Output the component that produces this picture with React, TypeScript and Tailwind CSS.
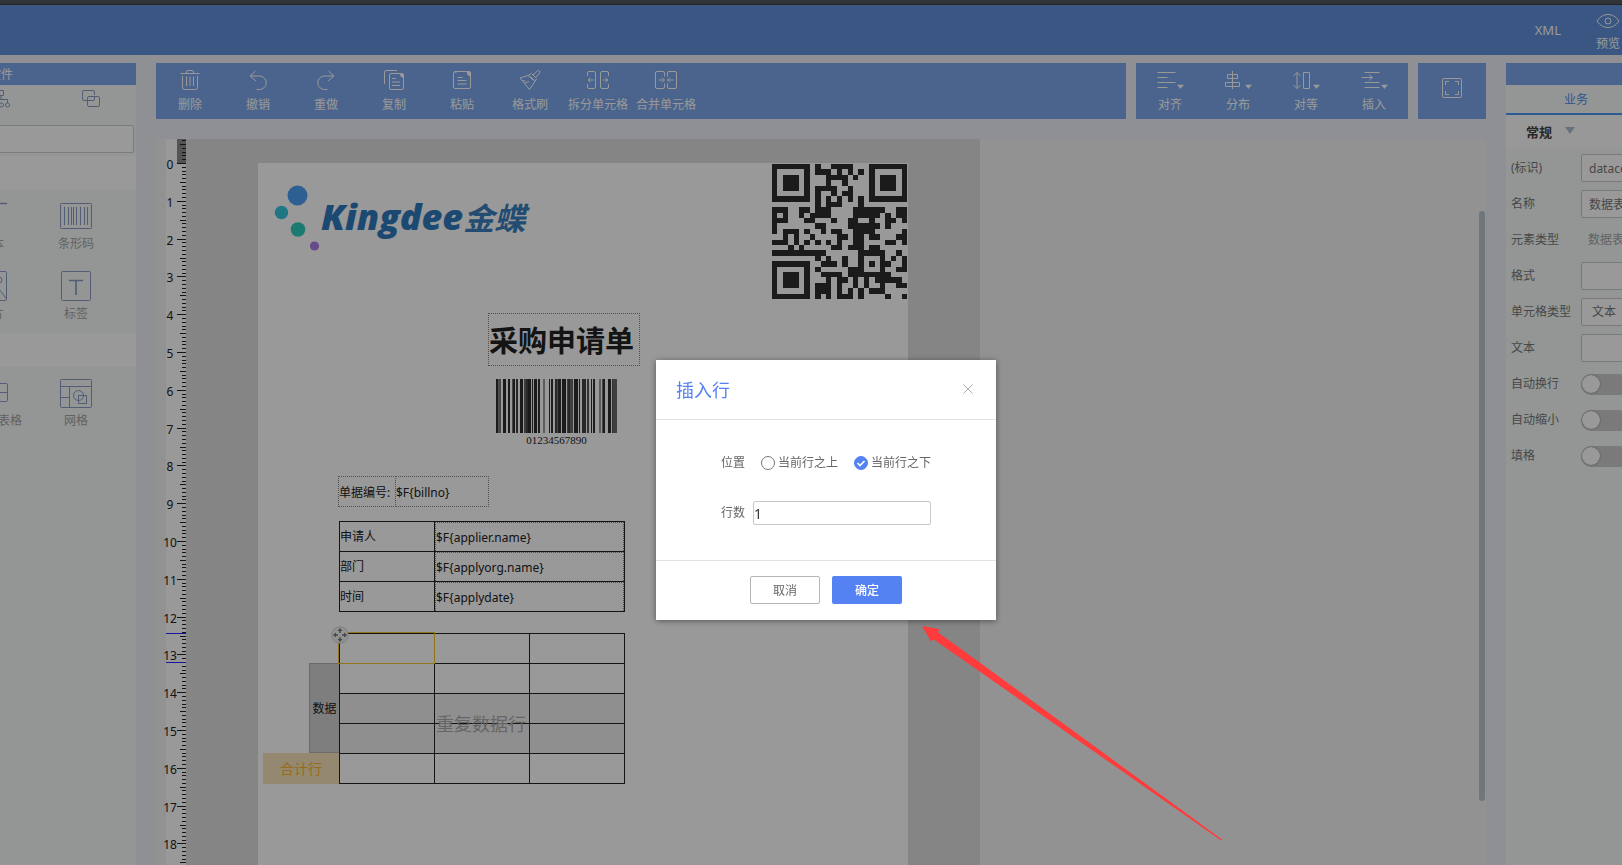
import type { ReactNode } from 'react';

const FONT = "font-['Noto_Sans','Noto_Sans_CJK_SC',sans-serif]";

/* ---------- icons ---------- */

function Icon({ w, h, children, className = '' }: { w: number; h: number; children: ReactNode; className?: string }) {
  return (
    <svg
      width={w}
      height={h}
      viewBox={`0 0 ${w} ${h}`}
      fill="none"
      stroke="currentColor"
      strokeWidth="1"
      className={className}
      aria-hidden="true"
    >
      {children}
    </svg>
  );
}

const TrashIcon = () => (
  <Icon w={20} h={20}>
    <path d="M.5 3.500h19M6.500 3.500V2a1.500 1.500 0 0 1 1.500-1.500h4A1.500 1.500 0 0 1 13.500 2v1.500M2.500 6v11.500a2 2 0 0 0 2 2h11a2 2 0 0 0 2-2V6M6.500 6.500v9.500M10 6.500v9.500M13.500 6.500v9.500" />
  </Icon>
);
const UndoIcon = () => (
  <Icon w={20} h={20}>
    <path d="M7.500 1 2 6l6 5M2 6h9.500a6.700 6.700 0 0 1 0 13.500H8.500" />
  </Icon>
);
const RedoIcon = () => (
  <Icon w={20} h={20}>
    <path d="M12.500 1 18 6l-6 5M18 6H8.500a6.700 6.700 0 0 0 0 13.500H11.500" />
  </Icon>
);
const CopyIcon = () => (
  <Icon w={20} h={20}>
    <path d="M.5 14V2A1.500 1.500 0 0 1 2 .5h11M5.500 5A1.500 1.500 0 0 1 7 3.500h10l2.500 3V18a1.500 1.500 0 0 1-1.500 1.500H7A1.500 1.500 0 0 1 5.500 18zM8 8.500h4M8 12h8M8 15.500h8" />
    <path d="M16.500 3.500h1.500a1.500 1.500 0 0 1 1.500 1.500v2.500l-2.500-1z" fill="currentColor" />
  </Icon>
);
const PasteIcon = () => (
  <Icon w={20} h={20}>
    <path d="M3.500 3A1.500 1.500 0 0 1 5 1.500h12l1.500 3V17a1.500 1.500 0 0 1-1.500 1.500H3A1.500 1.500 0 0 1 1.500 17V3A1.500 1.500 0 0 1 3 1.500h2M5.500 7.500h5M5.500 10.500h9M5.500 14h9" />
    <path d="M15 1.500h2a1.500 1.500 0 0 1 1.500 1.500v3l-2.500-1z" fill="currentColor" />
  </Icon>
);
const BrushIcon = () => (
  <Icon w={22} h={20}>
    <path d="m1 8 8-2.500 7 6L10.500 19.500zM3.500 10.500l3 .5M6 13l4-1.500M9 5.500l3.500-2 5 5-1.500 3M14 5l4.500-4.300a1.600 1.600 0 0 1 2.200 2.200L17 7" />
    <path d="m11.500 6.500 3.500 3.500" />
  </Icon>
);
const SplitIcon = () => (
  <Icon w={22} h={20}>
    <path d="M.5 6V3A1.500 1.500 0 0 1 2 1.500h5A1.500 1.500 0 0 1 8.500 3v3M.5 14v3A1.500 1.500 0 0 0 2 18.500h5A1.500 1.500 0 0 0 8.500 17v-3M21.500 6V3A1.500 1.500 0 0 0 20 1.500h-5A1.500 1.500 0 0 0 13.500 3v14a1.500 1.500 0 0 0 1.500 1.500h5a1.500 1.500 0 0 0 1.500-1.500v-3M8.500 6v8M1 10h5.500M3.500 7.500 1 10l2.500 2.500M15.500 10h5.500M18.500 7.500 21 10l-2.500 2.500" />
  </Icon>
);
const MergeIcon = () => (
  <Icon w={22} h={20}>
    <path d="M9.500 6.500V3A1.500 1.500 0 0 0 8 1.500H2A1.500 1.500 0 0 0 .5 3v14A1.500 1.500 0 0 0 2 18.500h6A1.500 1.500 0 0 0 9.500 17v-3.500M12.500 6.500V3A1.500 1.500 0 0 1 14 1.500h6A1.500 1.500 0 0 1 21.500 3v14a1.500 1.500 0 0 1-1.500 1.500h-6a1.500 1.500 0 0 1-1.500-1.500v-3.500M3.500 10h6M7 7.500 9.500 10 7 12.500M18.500 10h-6M15 7.500 12.500 10l2.500 2.500" />
  </Icon>
);
const Caret = () => <path d="M20.500 15h6l-3 3.500z" fill="currentColor" stroke="currentColor" strokeWidth=".5" />;
const AlignIcon = () => (
  <Icon w={27} h={20}>
    <path d="M.5 2.500h18M.5 7.500h10M.5 12.500h18M.5 17.500h10" />
    <Caret />
  </Icon>
);
const DistributeIcon = () => (
  <Icon w={27} h={20}>
    <path d="M7.500 1v18M2.500 4.500h10v4h-10zM.5 12.500h14v4H.5z" />
    <Caret />
  </Icon>
);
const EqualIcon = () => (
  <Icon w={27} h={20}>
    <path d="M4 2.500v16M.5 6 4 2.500 7.500 6M.5 15 4 18.500 7.500 15M10.500 2.500h6v16h-6z" />
    <Caret />
  </Icon>
);
const InsertIcon = () => (
  <Icon w={27} h={20}>
    <path d="M3.500 2.500h15M.5 7.500h11M8 4.500l3.500 3L8 10.500M3.500 12.500h15M3.500 17.500h15" />
    <Caret />
  </Icon>
);

/* ---------- toolbar ---------- */

function Tool({ icon, label }: { icon: ReactNode; label: string }) {
  return (
    <button type="button" className="flex w-[68px] flex-col items-center gap-[6px] whitespace-nowrap pt-[7px] text-[12px] leading-[18px] text-white">
      {icon}
      <span>{label}</span>
    </button>
  );
}

/* ---------- ruler ---------- */

function Ruler() {
  const ticks = Array.from({ length: 192 }, (_, i) => i - 6);
  return (
    <svg className="h-full w-5 shrink-0 overflow-visible bg-white" aria-hidden="true">
      <rect x="11" y="0" width="9" height="24" fill="#8c8c8c" />
      {ticks.map((n) => {
        const y = Math.round(24 + n * 3.78);
        const len = n % 10 === 0 ? 9 : n % 5 === 0 ? 6 : 4;
        return <rect key={n} x={20 - len} y={y} width={len} height="1" fill="#222" />;
      })}
      {Array.from({ length: 19 }, (_, n) => (
        <text key={n} x="4" y={Math.round(30 + n * 37.8)} textAnchor="middle" fontSize="12" fill="#222">
          {n}
        </text>
      ))}
      <rect x="0" y="494" width="20" height="1" fill="#2626ff" />
      <rect x="0" y="523" width="20" height="1" fill="#2626ff" />
    </svg>
  );
}

/* ---------- document artwork ---------- */

const QR = [
  '#######.#..####...#######',
  '#.....#.###.#.#.#.#.....#',
  '#.###.#...####.#..#.###.#',
  '#.###.#...#..#....#.###.#',
  '#.###.#.####..#...#.###.#',
  '#.....#.#..#.##...#.....#',
  '#######.#.#.#.#.#.#######',
  '........#.###...#........',
  '###..##.###....######..##',
  '#.#..#.####....#####.#.##',
  '###...##...#..##..#..##.#',
  '#.......##....######.#...',
  '#.###.#..#.##..####.....#',
  '..#.#..#....##.##.##...##',
  '###.#.#.#.#.#..##....##.#',
  '...#.#.....##.###.##.....',
  '##########......#####..#.',
  '........#.#..#..#...#.#.#',
  '#######..###.#..#.#.##..#',
  '#.....#.#.....###...#..##',
  '#.###.#..####.########...',
  '#.###.#...#.##.#.#.#####.',
  '#.###.#.###.#..#.#..#..##',
  '#.....#.###.#.#.#.###....',
  '#######.#.#.###.#....#..#',
];

function QrCode() {
  const d = QR.map((row, y) =>
    [...row].map((c, x) => (c === '#' ? `M${x} ${y}h1v1h-1z` : '')).join(''),
  ).join('');
  return (
    <svg width="135" height="135" viewBox="0 0 25 25" role="img" aria-label="QR" shapeRendering="crispEdges">
      <path d={d} fill="#2d2d2d" />
    </svg>
  );
}

const BARS: [number, number, string][] = [
  [0, 2, '#2d2d2d'], [2, 1, '#8a8a8a'], [3, 2, '#777'], [7, 3, '#2d2d2d'], [12, 2, '#2d2d2d'], [16, 1, '#777'],
  [17, 2, '#2d2d2d'], [20, 2, '#444'], [24, 3, '#2d2d2d'], [28, 2, '#666'], [30, 2, '#444'], [32, 3, '#2d2d2d'],
  [36, 1, '#2d2d2d'], [38, 3, '#2d2d2d'], [42, 2, '#333'], [47, 2, '#999'], [53, 1, '#2d2d2d'], [55, 2, '#333'],
  [59, 2, '#444'], [61, 1, '#777'], [62, 3, '#333'], [66, 4, '#2d2d2d'], [71, 6, '#6a6a6a'], [72, 2, '#444'],
  [78, 4, '#2d2d2d'], [83, 1, '#2d2d2d'], [86, 4, '#444'], [91, 2, '#555'], [95, 1, '#2d2d2d'], [97, 2, '#333'],
  [103, 2, '#999'], [106, 1, '#777'], [107, 2, '#333'], [112, 3, '#2d2d2d'], [116, 1, '#555'], [117, 4, '#6a6a6a'],
];

function Barcode() {
  return (
    <svg width="121" height="54" role="img" aria-label="barcode">
      {BARS.map(([x, w, fill]) => (
        <rect key={x} x={x} y="0" width={w} height="54" fill={fill} />
      ))}
    </svg>
  );
}

function Kingdee() {
  return (
    <div className="absolute left-[15px] top-[20px] flex items-start">
      <svg width="52" height="72" aria-hidden="true">
        <circle cx="24.500" cy="12.500" r="10" fill="#4e9ff5" />
        <circle cx="8.500" cy="29.500" r="6.700" fill="#35c6e0" />
        <circle cx="25" cy="46.500" r="7.300" fill="#30ccbd" />
        <circle cx="41.500" cy="63" r="4.600" fill="#a97ee6" />
      </svg>
      <div className="-ml-1 mt-[8px] flex items-baseline whitespace-nowrap leading-[52px] text-[#2f7abf]">
        <span className="font-['Open_Sans','Noto_Sans',sans-serif] text-[36px] font-extrabold italic">Kingdee</span>
        <span className="text-[31px] font-bold italic text-[#3a7fbd]">金蝶</span>
      </div>
    </div>
  );
}

/* ---------- tables ---------- */

const FIELDS = [
  ['申请人', '$F{applier.name}'],
  ['部门', '$F{applyorg.name}'],
  ['时间', '$F{applydate}'],
];

function Page() {
  return (
    <div className="relative w-[650px] shrink-0 bg-white text-[12px] leading-[18px] text-[#222]">
      <Kingdee />
      <div className="absolute left-[514px] top-px">
        <QrCode />
      </div>
      <h1 className="absolute left-[230px] top-[150px] flex h-[53px] w-[152px] items-center whitespace-nowrap border border-dotted border-[#888] pt-[2px] text-[29px] font-bold leading-[40px]">
        采购申请单
      </h1>
      <div className="absolute left-[238px] top-[216px] flex flex-col items-center">
        <Barcode />
        <span className="font-['Liberation_Serif',serif] text-[11px] leading-[14px]">01234567890</span>
      </div>
      <div className="absolute left-[80px] top-[313px] flex h-[31px] items-stretch whitespace-nowrap">
        <span className="flex w-[58px] items-center border border-dotted border-[#888] pt-[2px]">单据编号:</span>
        <span className="flex w-[93px] items-center border border-l-0 border-dotted border-[#888] pt-[2px]">$F&#123;billno&#125;</span>
      </div>

      <table className="absolute left-[81px] top-[358px] w-[286px] table-fixed border-collapse">
        <colgroup>
          <col className="w-[95px]" />
          <col />
        </colgroup>
        <tbody>
          {FIELDS.map(([k, v]) => (
            <tr key={k} className="h-[30px]">
              <td className="border border-[#222] p-0">{k}</td>
              <td className="border border-[#222] p-0">
                <div className="flex h-[29px] items-center border-x border-t border-dotted border-[#888] pt-[2px]">{v}</div>
              </td>
            </tr>
          ))}
        </tbody>
      </table>

      <div className="absolute left-[51px] top-[500px] flex h-[90px] w-[31px] items-center justify-center border border-[#b2b2b2] bg-[#d2d2d2] pt-[2px]">
        数据
      </div>
      <div className="absolute left-[5px] top-[590px] flex h-[31px] w-[76px] items-center justify-center bg-[#f9e3bb] text-[14px] text-[#ffb32e]">
        合计行
      </div>
      <table className="absolute left-[81px] top-[470px] w-[286px] table-fixed border-collapse">
        <tbody>
          {[0, 1, 2, 3, 4].map((r) => (
            <tr key={r} className={r === 2 || r === 3 ? 'h-[30px] bg-[#eee]' : 'h-[30px]'}>
              {[0, 1, 2].map((c) => (
                <td key={c} className="border border-[#222] p-0" />
              ))}
            </tr>
          ))}
        </tbody>
      </table>
      <div className="absolute left-[178px] top-[548px] whitespace-nowrap text-[18px] leading-[26px] text-[#aaa]">重复数据行</div>
      <div className="absolute left-[80px] top-[469px] h-[32px] w-[97px] border border-[#f3c52b]" />
      <svg className="absolute left-[73px] top-[463px]" width="18" height="18" viewBox="0 0 18 18" aria-hidden="true">
        <circle cx="9" cy="9" r="8.200" fill="#f4f4f4" stroke="#d0d0d0" />
        <path d="M9 2l2.500 3h-5zM9 16l2.500-3h-5zM2 9l3-2.500v5zM16 9l-3-2.500v5zM8.300 5h1.400v2H8.300zM8.300 11h1.400v2H8.300zM5 8.300h2v1.400H5zM11 8.300h2v1.400h-2z" fill="#777" />
      </svg>
    </div>
  );
}

/* ---------- left palette ---------- */

function PaletteItem({ icon, label }: { icon: ReactNode; label: string }) {
  return (
    <button type="button" className="flex w-[84px] flex-col items-center whitespace-nowrap text-[12px] leading-[18px] text-[#a3a3a3]">
      <span className="flex h-[30px] items-center text-[#8b9cc4]">{icon}</span>
      <span className="mt-[4px]">{label}</span>
    </button>
  );
}

function Palette() {
  return (
    <aside className="flex w-[136px] shrink-0 justify-end overflow-hidden bg-[#f5fbf8]">
      <div className="w-[270px] shrink-0">
        <h2 className="flex h-[22px] items-center justify-center bg-[#7da7eb] pt-[2px] text-[12px] text-white">控件</h2>
        <div className="grid h-[40px] grid-cols-3 justify-items-center pt-[5px] text-[#8b9cc4]">
          <span />
          <Icon w={20} h={18}>
            <path d="M7.500.5h5v5h-5zM10 5.500v4M3.500 13V9.500h13V13" />
            <circle cx="3.500" cy="15" r="2" />
            <circle cx="10.500" cy="15" r="2" />
            <circle cx="16.500" cy="15" r="2" />
          </Icon>
          <Icon w={18} h={18}>
            <path d="M5.500 10.500H2A1.500 1.500 0 0 1 .5 9V2A1.500 1.500 0 0 1 2 .5h9A1.500 1.500 0 0 1 12.500 2v3" />
            <path d="M12.500 6.500H16A1.500 1.500 0 0 1 17.500 8v7a1.500 1.500 0 0 1-1.500 1.500H7A1.500 1.500 0 0 1 5.500 15V8A1.500 1.500 0 0 1 7 6.500" />
            <path d="M5.500 10.500h5.500a1.500 1.500 0 0 0 1.500-1.500V6.500H7" />
          </Icon>
        </div>
        <div className="h-[31px] pr-[2px]">
          <input aria-label="搜索" className="block h-[28px] w-full rounded-xs border border-[#cfcfcf] bg-white px-2 text-[12px]" />
        </div>
        <div className="h-[34px] bg-white" />
        <div className="flex h-[143px] flex-wrap content-start gap-y-[18px] pl-[84px] pr-[18px] pt-[11px]">
          <PaletteItem
            label="文本"
            icon={
              <Icon w={30} h={28}>
                <path d="M0 1.500h30M15 1.500v25" strokeWidth="1.500" />
              </Icon>
            }
          />
          <PaletteItem
            label="条形码"
            icon={
              <Icon w={32} h={26}>
                <rect x=".5" y=".5" width="31" height="25" rx="1" />
                <path d="M4.500 4v18M8.500 4v18M11.500 4v18M13.500 4v18M16.500 4v18M20.500 4v18M24.500 4v18M27.500 4v18" />
              </Icon>
            }
          />
          <PaletteItem
            label="图片"
            icon={
              <Icon w={30} h={30}>
                <rect x=".5" y=".5" width="29" height="29" rx="1" />
                <circle cx="22" cy="9" r="3" />
                <path d="m1 24 9-11 13 16M18 22l4-4 7.500 10" />
              </Icon>
            }
          />
          <PaletteItem
            label="标签"
            icon={
              <Icon w={30} h={30}>
                <rect x=".5" y=".5" width="29" height="29" rx="1" />
                <path d="M8 9.500h14M15 9.500V24" strokeWidth="1.700" />
              </Icon>
            }
          />
        </div>
        <div className="h-[34px] bg-white" />
        <div className="flex flex-wrap pl-[84px] pr-[18px] pt-[11px]">
          <PaletteItem
            label="主数据表格"
            icon={
              <Icon w={32} h={20}>
                <rect x=".5" y=".5" width="31" height="18" rx="1" />
                <path d="M.5 9.500h31M10.500.5v18M21.500.5v18" />
              </Icon>
            }
          />
          <PaletteItem
            label="网格"
            icon={
              <Icon w={32} h={29}>
                <rect x=".5" y=".5" width="31" height="28" rx="1" />
                <path d="M.5 7.500h31M9.500 7.500v21M.5 18.500h9" />
                <circle cx="18.500" cy="16.500" r="5" />
                <rect x="18.500" y="16.500" width="8" height="8" />
              </Icon>
            }
          />
        </div>
      </div>
    </aside>
  );
}

/* ---------- right property panel ---------- */

function Row({ label, id, children }: { label: string; id: string; children: ReactNode }) {
  return (
    <div className="flex h-9 items-center pl-[5px] text-[12px] text-[#777]">
      <label htmlFor={id} className="w-[70px] shrink-0">
        {label}
      </label>
      {children}
    </div>
  );
}

const FIELD = 'h-7 w-[190px] rounded-xs border border-[#c8c8c8] bg-white px-[7px] text-[#777]';

function Switch({ id }: { id: string }) {
  return (
    <span className="relative flex h-[21px] w-12 items-center">
      <input id={id} type="checkbox" className="size-full appearance-none rounded-full bg-[#ccc]" />
      <span className="pointer-events-none absolute left-px size-[18px] rounded-full bg-white shadow-[0_0_2px_#777]" />
    </span>
  );
}

function Properties() {
  return (
    <aside className="w-[116px] shrink-0 overflow-hidden bg-[#f5fbf8]">
      <div className="w-[280px]">
        <div className="h-[22px] bg-[#7da7eb]" />
        <div className="flex h-[30px] border-b-2 border-[#4d97f5]">
          <button type="button" className="w-[140px] pt-[2px] text-[12px] text-[#4d8ff0]">
            业务
          </button>
        </div>
        <h3 className="flex h-[34px] items-center gap-[13px] bg-[#fdfdfd] pl-[20px] pt-[2px] text-[13px] font-bold text-[#444]">
          常规
          <svg width="10" height="8" className="-mt-1" aria-hidden="true">
            <path d="M0 0h10L5 7z" fill="#adb9d0" />
          </svg>
        </h3>
        <div className="pt-px">
          <Row label="(标识)" id="key">
            <input id="key" defaultValue="datacell" className={FIELD} />
          </Row>
          <Row label="名称" id="name">
            <input id="name" defaultValue="数据表格" className={FIELD} />
          </Row>
          <Row label="元素类型" id="kind">
            <output id="kind" className="pl-[7px] text-[#a0a4ac]">
              数据表格
            </output>
          </Row>
          <Row label="格式" id="format">
            <input id="format" className={FIELD} />
          </Row>
          <Row label="单元格类型" id="cell">
            <select id="cell" className="h-7 w-[190px] appearance-none rounded-xs border border-[#c8c8c8] bg-white px-[10px] text-[#777]">
              <option>文本</option>
            </select>
          </Row>
          <Row label="文本" id="text">
            <input id="text" className={FIELD} />
          </Row>
          <Row label="自动换行" id="wrap">
            <Switch id="wrap" />
          </Row>
          <Row label="自动缩小" id="shrink">
            <Switch id="shrink" />
          </Row>
          <Row label="填格" id="fill">
            <Switch id="fill" />
          </Row>
        </div>
      </div>
    </aside>
  );
}

/* ---------- dialog ---------- */

function Option({ label, checked }: { label: string; checked?: boolean }) {
  return (
    <label className="relative flex items-center gap-[3px]">
      <input
        type="radio"
        name="position"
        defaultChecked={checked}
        className="size-[14px] appearance-none rounded-full border border-[#777] bg-white checked:border-[#5582f3] checked:bg-[#5582f3]"
      />
      {checked && (
        <svg width="14" height="14" className="pointer-events-none absolute left-0" fill="none" stroke="#fff" strokeWidth="1.600" aria-hidden="true">
          <path d="m3.500 7 2.500 2.500 4.500-4.500" />
        </svg>
      )}
      {label}
    </label>
  );
}

function InsertRowDialog() {
  return (
    <div className="fixed inset-0 flex items-start justify-center bg-black/40 pl-[30px] pt-[360px]">
      <form role="dialog" aria-label="插入行" className="w-[340px] bg-white text-[12px] text-[#666] shadow-[0_1px_6px_rgba(0,0,0,0.45)]">
        <header className="flex h-[60px] items-center justify-between border-b border-[#e2e2e2] pl-5 pr-[23px] pt-[2px]">
          <h2 className="text-[18px] text-[#5582f3]">插入行</h2>
          <button type="button" aria-label="关闭" className="pb-1 text-[#aaa]">
            <Icon w={10} h={10}>
              <path d="m.5.5 9 9M9.500.5l-9 9" />
            </Icon>
          </button>
        </header>
        <div className="flex h-[140px] flex-col gap-[26px] px-[65px] pt-[31px]">
          <div className="flex h-6 items-center">
            <span className="w-[40px]">位置</span>
            <div className="flex gap-4 whitespace-nowrap">
              <Option label="当前行之上" />
              <Option label="当前行之下" checked />
            </div>
          </div>
          <div className="flex h-6 items-center">
            <label htmlFor="rows" className="w-8 shrink-0">
              行数
            </label>
            <input id="rows" defaultValue="1" className="h-6 w-full min-w-0 flex-1 rounded-xs border border-[#c8c8c8] text-[14px] text-[#333]" />
          </div>
        </div>
        <footer className="flex h-[60px] justify-center gap-3 border-t border-[#e2e2e2] pt-[15px]">
          <button type="button" className="h-7 w-[70px] rounded-xs border border-[#b5b5b5] bg-white pt-[2px]">
            取消
          </button>
          <button type="button" className="h-7 w-[70px] rounded-xs bg-[#5582f3] pt-[2px] font-medium text-white">
            确定
          </button>
        </footer>
      </form>
    </div>
  );
}

/* ---------- app ---------- */

export default function App() {
  return (
    <div className={`relative flex h-screen flex-col overflow-hidden bg-[#eef1f5] ${FONT}`}>
      <div className="h-[5px] shrink-0 border-b border-[#3f3f3f] bg-[#53575a]" />
      <header className="flex h-[50px] shrink-0 items-center justify-end gap-[35px] bg-[#6291da] pr-[2px] text-white">
        <button type="button" className="pt-[2px] text-[13px]">
          XML
        </button>
        <button type="button" className="flex flex-col items-center gap-[6px] pt-[6px] text-[12px] leading-[18px]">
          <Icon w={24} h={16}>
            <path d="M1 8c3-4.500 7-6.500 11-6.500S20 3.500 23 8c-3 4.500-7 6.500-11 6.500S4 12.500 1 8z" />
            <circle cx="12" cy="8" r="3" />
          </Icon>
          <span>预览</span>
        </button>
      </header>

      <div className="flex min-h-0 flex-1 gap-5 pt-2">
        <Palette />

        <main className="flex min-w-0 flex-1 flex-col gap-5">
          <div className="flex h-14 shrink-0 gap-[10px]">
            <div className="flex flex-1 bg-[#7da7eb]">
              <Tool icon={<TrashIcon />} label="删除" />
              <Tool icon={<UndoIcon />} label="撤销" />
              <Tool icon={<RedoIcon />} label="重做" />
              <Tool icon={<CopyIcon />} label="复制" />
              <Tool icon={<PasteIcon />} label="粘贴" />
              <Tool icon={<BrushIcon />} label="格式刷" />
              <Tool icon={<SplitIcon />} label="拆分单元格" />
              <Tool icon={<MergeIcon />} label="合并单元格" />
            </div>
            <div className="flex bg-[#7da7eb]">
              <Tool icon={<AlignIcon />} label="对齐" />
              <Tool icon={<DistributeIcon />} label="分布" />
              <Tool icon={<EqualIcon />} label="对等" />
              <Tool icon={<InsertIcon />} label="插入" />
            </div>
            <button type="button" aria-label="全屏" className="flex w-[68px] items-center justify-center bg-[#7da7eb] pb-[6px] text-white">
              <Icon w={20} h={20}>
                <rect x=".5" y=".5" width="19" height="19" rx="1.500" />
                <path d="M3.500 7V3.500H7M13 3.500h3.500V7M16.500 13v3.500H13M7 16.500H3.500V13" />
              </Icon>
            </button>
          </div>

          <div className="flex min-h-0 flex-1 overflow-hidden bg-[#f3f3f3] pl-[10px]">
            <Ruler />
            <div className="flex bg-[#dedede] px-[72px] pt-6">
              <Page />
            </div>
            <div className="ml-auto mr-px mt-[72px] h-[590px] w-[6px] rounded-full bg-[#b9c6cf]" />
          </div>
        </main>

        <Properties />
      </div>

      <InsertRowDialog />

      <svg className="pointer-events-none absolute left-[922px] top-[626px]" width="302" height="217" aria-hidden="true">
        <path d="M0 0l18 3.200-2.200 3L58 36.700 300 213.500l-.8 1L58 45.700 11.500 13.200 9 15.500z" fill="#ff3b3b" />
      </svg>
    </div>
  );
}
